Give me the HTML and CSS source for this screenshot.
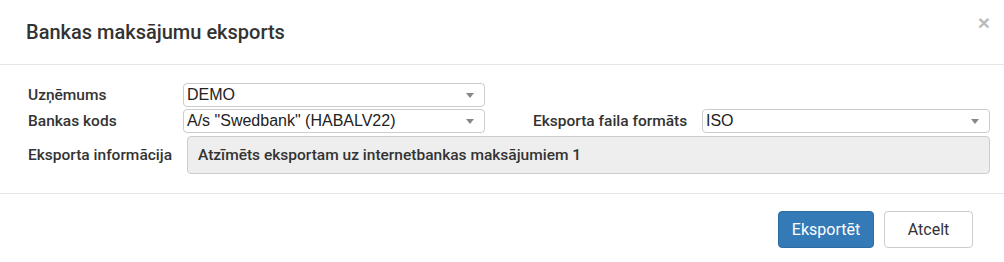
FILE: index.html
```html
<!DOCTYPE html>
<html lang="lv">
<head>
<meta charset="utf-8">
<title>Bankas maksājumu eksports</title>
<link rel="stylesheet" href="styles.css">
</head>
<body>
<div class="modal">
  <div class="modal-header">
    <h4 class="modal-title">Bankas maksājumu eksports</h4>
    <button class="close" type="button" aria-label="Close">×</button>
  </div>
  <div class="modal-body">
    <div class="row">
      <label class="lbl">Uzņēmums</label>
      <div class="select sel-main"><span>DEMO</span><i class="caret"></i></div>
    </div>
    <div class="row row2">
      <label class="lbl">Bankas kods</label>
      <div class="select sel-main"><span>A/s "Swedbank" (HABALV22)</span><i class="caret"></i></div>
      <label class="lbl lbl2">Eksporta faila formāts</label>
      <div class="select sel-fmt"><span>ISO</span><i class="caret"></i></div>
    </div>
    <div class="row row3">
      <label class="lbl">Eksporta informācija</label>
      <div class="info">Atzīmēts eksportam uz internetbankas maksājumiem 1</div>
    </div>
  </div>
  <div class="modal-footer">
    <button class="btn btn-primary" type="button">Eksportēt</button>
    <button class="btn btn-default" type="button">Atcelt</button>
  </div>
</div>
</body>
</html>
```
FILE: styles.css
```css
* { box-sizing: border-box; }
html, body { margin: 0; padding: 0; background: #fff; }
body {
  font-family: Roboto, "Liberation Sans", Arial, sans-serif;
  font-size: 15.5px;
  color: #333;
  width: 1004px;
  height: 262px;
  overflow: hidden;
}
.modal { width: 1004px; }
.modal-header {
  height: 65px;
  border-bottom: 1px solid #e5e5e5;
  display: flex;
  align-items: center;
  justify-content: space-between;
  padding: 0 14px 0 26px;
}
.modal-title {
  margin: 0;
  font-size: 20px;
  font-weight: 500;
  color: #333;
  line-height: 1;
  padding-bottom: 1px;
}
.close {
  border: 0;
  background: none;
  padding: 0;
  margin: 0 0 19px 0;
  font-family: "Liberation Sans", Arial, sans-serif;
  font-size: 21px;
  font-weight: 700;
  line-height: 1;
  color: #bbb;
  cursor: pointer;
}
.modal-body {
  height: 129px;
  border-bottom: 1px solid #e5e5e5;
  padding: 18px 14px 0 28px;
}
.row {
  display: flex;
  align-items: center;
  height: 24px;
}
.row2 { margin-top: 2px; }
.row3 { margin-top: 3px; height: 38px; }
.lbl {
  font-weight: 500;
  color: #333;
  width: 155px;
  flex: none;
  white-space: nowrap;
}
.row3 .lbl { width: 159px; }
.lbl2 { width: 217px; padding-left: 48px; }
.select {
  height: 24px;
  border: 1px solid #ccc;
  border-radius: 4px;
  background: #fff;
  display: flex;
  align-items: center;
  justify-content: space-between;
  padding: 0 10px 0 3px;
  color: #222;
  flex: none;
  font-family: "Liberation Sans", Arial, sans-serif;
  font-size: 16px;
}
.sel-main { width: 302px; }
.sel-fmt { width: 288px; }
.caret {
  width: 0;
  height: 0;
  border-left: 4px solid transparent;
  border-right: 4px solid transparent;
  border-top: 5px solid #888;
}
.info {
  flex: 1;
  height: 38px;
  background: #eee;
  border: 1px solid #ccc;
  border-radius: 4px;
  display: flex;
  align-items: center;
  padding-left: 10px;
  font-weight: 500;
  color: #333;
}
.modal-footer {
  display: flex;
  justify-content: flex-end;
  gap: 10px;
  padding: 17px 31px 0 0;
}
.btn {
  font-family: Roboto, "Liberation Sans", Arial, sans-serif;
  font-size: 16px;
  height: 37px;
  border-radius: 4px;
  border: 1px solid;
  padding: 0;
  cursor: pointer;
}
.btn-primary {
  width: 96px;
  background: #337ab7;
  border-color: #2e6da4;
  color: #fff;
}
.btn-default {
  width: 89px;
  background: #fff;
  border-color: #ccc;
  color: #333;
}
```
